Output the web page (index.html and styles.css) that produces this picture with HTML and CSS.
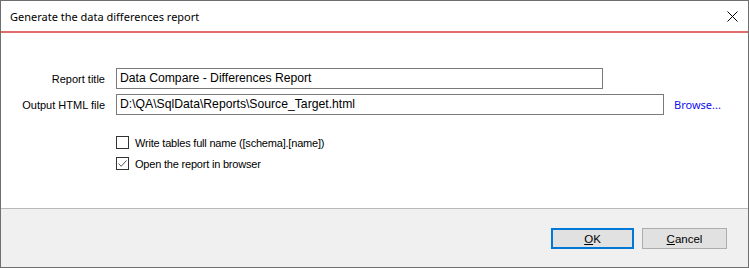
FILE: index.html
```html
<!DOCTYPE html>
<html lang="en">
<head>
    <meta charset="UTF-8">
    <title>Generate the data differences report</title>
    <link rel="stylesheet" href="styles.css">
</head>
<body>
  <div class="window">
    <div class="titlebar">
      <span class="title">Generate the data differences report</span>
      <svg class="close" width="11" height="11" viewBox="0 0 11 11">
        <path d="M0.5 0.5 L10.5 10.5 M10.5 0.5 L0.5 10.5" stroke="#000" stroke-width="1" fill="none"/>
      </svg>
    </div>

    <div class="content">
      <div class="row">
        <label class="label">Report title</label>
        <div class="input input-title">Data Compare - Differences Report</div>
      </div>
      <div class="row">
        <label class="label">Output HTML file</label>
        <div class="input input-file">D:\QA\SqlData\Reports\Source_Target.html</div>
        <a class="browse">Browse...</a>
      </div>

      <div class="checks">
        <div class="check">
          <span class="box"></span>
          <span>Write tables full name ([schema].[name])</span>
        </div>
        <div class="check">
          <span class="box">
            <svg width="11" height="11" viewBox="0 0 11 11">
              <path d="M1.5 5.5 L4.2 8.3 L9.5 2.5" stroke="#555" stroke-width="1" fill="none"/>
            </svg>
          </span>
          <span>Open the report in browser</span>
        </div>
      </div>
    </div>

    <div class="footer">
      <button class="btn btn-default"><u>O</u>K</button>
      <button class="btn"><u>C</u>ancel</button>
    </div>
  </div>
</body>
</html>
```

FILE: styles.css
```css
/* Dialog frame */
body {
    margin: 0;
    background: #ffffff;
    font-family: "Liberation Sans", Arial, sans-serif;
    font-size: 11px;
    color: #000000;
}

.window {
    width: 749px;
    height: 268px;
    box-sizing: border-box;
    border: 1px solid #6f6f6f;
    display: flex;
    flex-direction: column;
    background: #ffffff;
}

.titlebar {
    height: 30px;
    border-bottom: 2px solid #e06c6c;
    display: flex;
    align-items: center;
    justify-content: space-between;
    padding: 0 10px 0 9px;
}

.title {
    font-family: "Noto Sans", sans-serif;
    font-size: 11px;
    margin-top: 1px;
}

/* Form area */
.content {
    flex: 1;
    padding-top: 35px;
}

.row {
    display: flex;
    align-items: center;
    margin-bottom: 5px;
}

.label {
    width: 104px;
    text-align: right;
    margin-right: 11px;
}

.input {
    height: 21px;
    box-sizing: border-box;
    border: 1px solid #7a7a7a;
    padding: 0 3px;
    font-size: 12.2px;
    line-height: 19px;
    white-space: nowrap;
}

.input-title {
    width: 487px;
}

.input-file {
    width: 548px;
}

.browse {
    margin-left: 10px;
    color: #1010f0;
    font-family: "Noto Sans", sans-serif;
    font-size: 11px;
}

.checks {
    margin-top: 21px;
    margin-left: 115px;
    display: flex;
    flex-direction: column;
    gap: 8px;
}

.check {
    display: flex;
    align-items: center;
    height: 13px;
    letter-spacing: -0.2px;
}

.box {
    width: 13px;
    height: 13px;
    box-sizing: border-box;
    border: 1px solid #333333;
    margin-right: 6px;
    display: flex;
    align-items: center;
    justify-content: center;
}

/* Button strip */
.footer {
    height: 59px;
    box-sizing: border-box;
    border-top: 1px solid #b9b9b9;
    background: #f0f0f0;
    display: flex;
    justify-content: flex-end;
    align-items: flex-start;
    gap: 8px;
    padding: 19px 21px 0 0;
}

.btn {
    width: 85px;
    height: 21px;
    box-sizing: border-box;
    border: 1px solid #adadad;
    background: #e1e1e1;
    font-family: "Liberation Sans", Arial, sans-serif;
    font-size: 11.5px;
    padding: 0;
}

.btn-default {
    width: 83px;
    border: 2px solid #0078d7;
}
```
